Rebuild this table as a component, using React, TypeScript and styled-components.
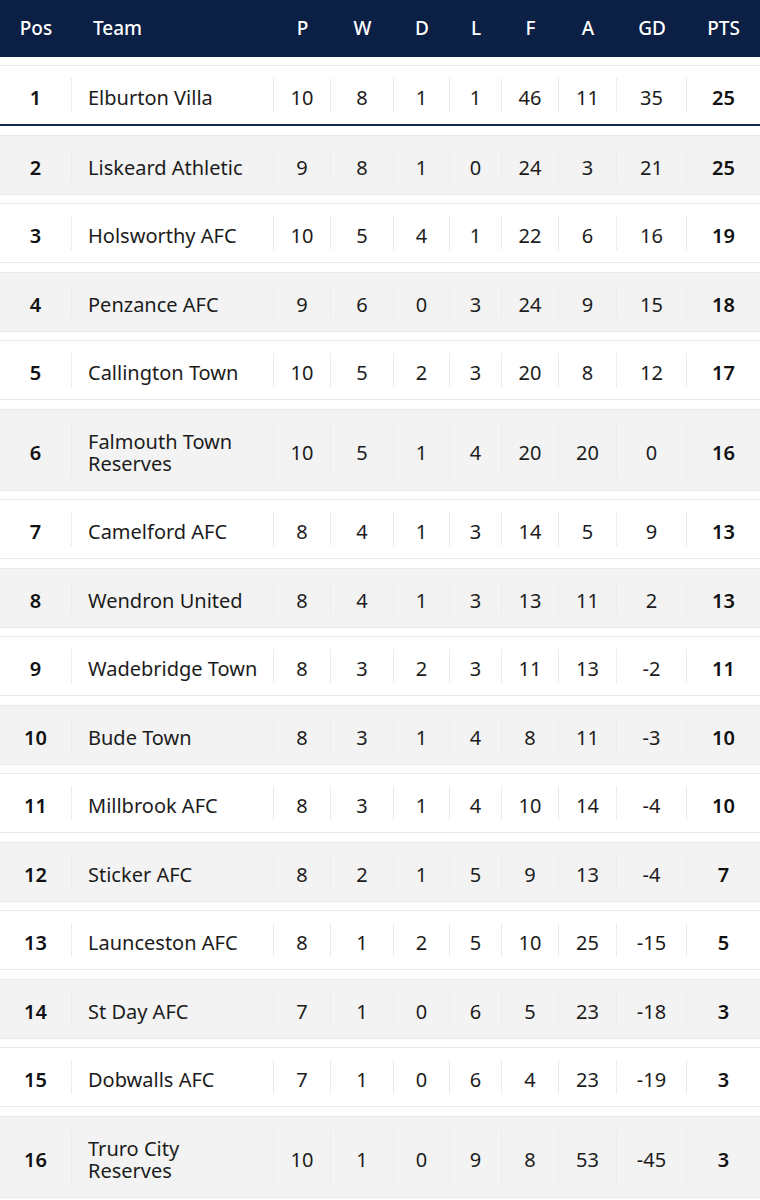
import React from 'react'
import styled, { createGlobalStyle } from 'styled-components'

const GlobalStyle = createGlobalStyle`
    html, body {
        margin: 0;
        padding: 0;
        background: #ffffff;
        font-family: "Noto Sans", "Open Sans", Arial, sans-serif;
        color: #161616;
    }
`

// column widths measured off the divider lines
const COLS = '72px 202px 57px 63px 56px 52px 57px 58px 70px 73px'

interface TeamRow {
    pos: number
    team: string
    p: number
    w: number
    d: number
    l: number
    f: number
    a: number
    gd: number
    pts: number
}

const rows: TeamRow[] = [
    { pos: 1, team: 'Elburton Villa', p: 10, w: 8, d: 1, l: 1, f: 46, a: 11, gd: 35, pts: 25 },
    { pos: 2, team: 'Liskeard Athletic', p: 9, w: 8, d: 1, l: 0, f: 24, a: 3, gd: 21, pts: 25 },
    { pos: 3, team: 'Holsworthy AFC', p: 10, w: 5, d: 4, l: 1, f: 22, a: 6, gd: 16, pts: 19 },
    { pos: 4, team: 'Penzance AFC', p: 9, w: 6, d: 0, l: 3, f: 24, a: 9, gd: 15, pts: 18 },
    { pos: 5, team: 'Callington Town', p: 10, w: 5, d: 2, l: 3, f: 20, a: 8, gd: 12, pts: 17 },
    { pos: 6, team: 'Falmouth Town Reserves', p: 10, w: 5, d: 1, l: 4, f: 20, a: 20, gd: 0, pts: 16 },
    { pos: 7, team: 'Camelford AFC', p: 8, w: 4, d: 1, l: 3, f: 14, a: 5, gd: 9, pts: 13 },
    { pos: 8, team: 'Wendron United', p: 8, w: 4, d: 1, l: 3, f: 13, a: 11, gd: 2, pts: 13 },
    { pos: 9, team: 'Wadebridge Town', p: 8, w: 3, d: 2, l: 3, f: 11, a: 13, gd: -2, pts: 11 },
    { pos: 10, team: 'Bude Town', p: 8, w: 3, d: 1, l: 4, f: 8, a: 11, gd: -3, pts: 10 },
    { pos: 11, team: 'Millbrook AFC', p: 8, w: 3, d: 1, l: 4, f: 10, a: 14, gd: -4, pts: 10 },
    { pos: 12, team: 'Sticker AFC', p: 8, w: 2, d: 1, l: 5, f: 9, a: 13, gd: -4, pts: 7 },
    { pos: 13, team: 'Launceston AFC', p: 8, w: 1, d: 2, l: 5, f: 10, a: 25, gd: -15, pts: 5 },
    { pos: 14, team: 'St Day AFC', p: 7, w: 1, d: 0, l: 6, f: 5, a: 23, gd: -18, pts: 3 },
    { pos: 15, team: 'Dobwalls AFC', p: 7, w: 1, d: 0, l: 6, f: 4, a: 23, gd: -19, pts: 3 },
    { pos: 16, team: 'Truro City Reserves', p: 10, w: 1, d: 0, l: 9, f: 8, a: 53, gd: -45, pts: 3 },
]

const LeagueTable = () => {
    return (
        <>
            <GlobalStyle />
            <Wrapper>
                <HeaderBar>
                    <HeadCell>Pos</HeadCell>
                    <HeadCell $left>Team</HeadCell>
                    <HeadCell>P</HeadCell>
                    <HeadCell>W</HeadCell>
                    <HeadCell>D</HeadCell>
                    <HeadCell>L</HeadCell>
                    <HeadCell>F</HeadCell>
                    <HeadCell>A</HeadCell>
                    <HeadCell>GD</HeadCell>
                    <HeadCell>PTS</HeadCell>
                </HeaderBar>
                <Body>
                    {
                        rows.map((r, i) => (
                            <Row key={r.pos} $shaded={i % 2 === 1} $leader={i === 0}>
                                <Cell $strong>{r.pos}</Cell>
                                <TeamCell>{r.team}</TeamCell>
                                <Cell>{r.p}</Cell>
                                <Cell>{r.w}</Cell>
                                <Cell>{r.d}</Cell>
                                <Cell>{r.l}</Cell>
                                <Cell>{r.f}</Cell>
                                <Cell>{r.a}</Cell>
                                <Cell>{r.gd}</Cell>
                                <Cell $strong $last>{r.pts}</Cell>
                            </Row>
                        ))
                    }
                </Body>
            </Wrapper>
        </>
    )
}

const Wrapper = styled.div`
    width: 760px;
    overflow: hidden;
`

const HeaderBar = styled.div`
    display: grid;
    grid-template-columns: ${COLS};
    align-items: center;
    height: 57px;
    background: #0c1f45;
    color: #ffffff;
`

const HeadCell = styled.div<{ $left?: boolean }>`
    font-size: 19px;
    font-weight: 500;
    text-align: ${p => p.$left ? 'left' : 'center'};
    padding-left: ${p => p.$left ? '21px' : '0'};
    padding-bottom: 1px;
`

const Body = styled.div`
    display: flex;
    flex-direction: column;
    gap: 8.5px;
    padding-top: 8px;
`

const Row = styled.div<{ $shaded: boolean, $leader: boolean }>`
    display: grid;
    grid-template-columns: ${COLS};
    align-items: stretch;
    padding: 12px 0;
    background: ${p => p.$shaded ? '#f3f3f3' : '#ffffff'};
    border-top: 1px solid #e9e9e9;
    border-bottom: ${p => p.$leader ? '2px solid #142650' : '1px solid #e9e9e9'};
`

const Cell = styled.div<{ $strong?: boolean, $last?: boolean }>`
    display: flex;
    align-items: center;
    justify-content: center;
    padding: 9px 0 3px;
    font-size: 20px;
    line-height: 22px;
    font-weight: ${p => p.$strong ? 600 : 400};
    color: ${p => p.$strong ? '#111111' : '#1c1c1c'};
    border-right: ${p => p.$last ? 'none' : '1px solid #ececec'};
`

const TeamCell = styled.div`
    display: flex;
    align-items: center;
    padding: 9px 12px 3px 16px;
    font-size: 20px;
    line-height: 22px;
    color: #1c1c1c;
    border-right: 1px solid #ececec;
`

export default function App() {
    return <LeagueTable />
}
